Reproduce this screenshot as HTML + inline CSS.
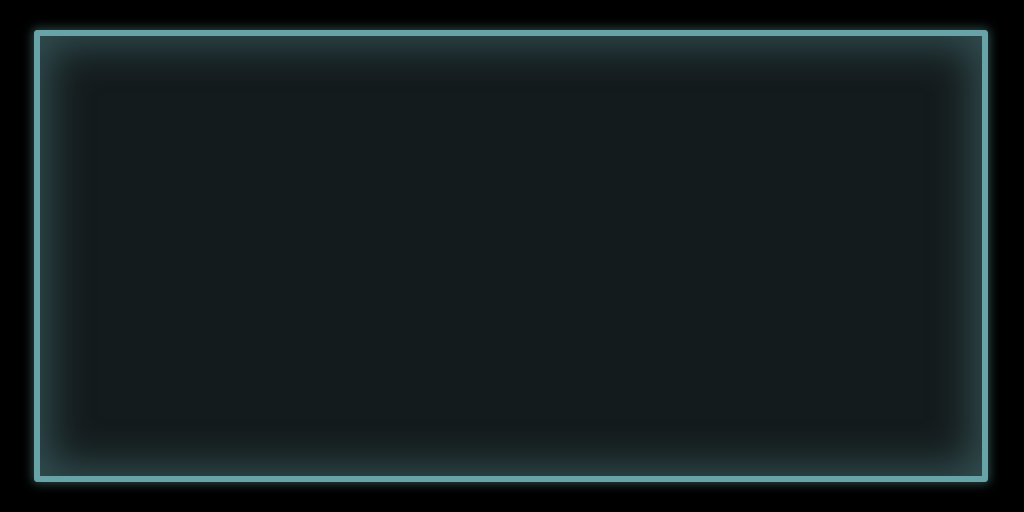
<!DOCTYPE html>
<html><head><style>
html,body{margin:0;padding:0;background:#000;width:1024px;height:512px;overflow:hidden}
.b{position:absolute;left:34px;top:30px;width:954px;height:452px;box-sizing:border-box;border:6px solid #68a3a7;border-radius:3px;background:#141b1c;
box-shadow:0 0 10px 2px rgba(106,167,171,.4), inset 0 0 40px 10px rgba(80,130,135,.5);}
</style></head><body><div class="b"></div></body></html>
